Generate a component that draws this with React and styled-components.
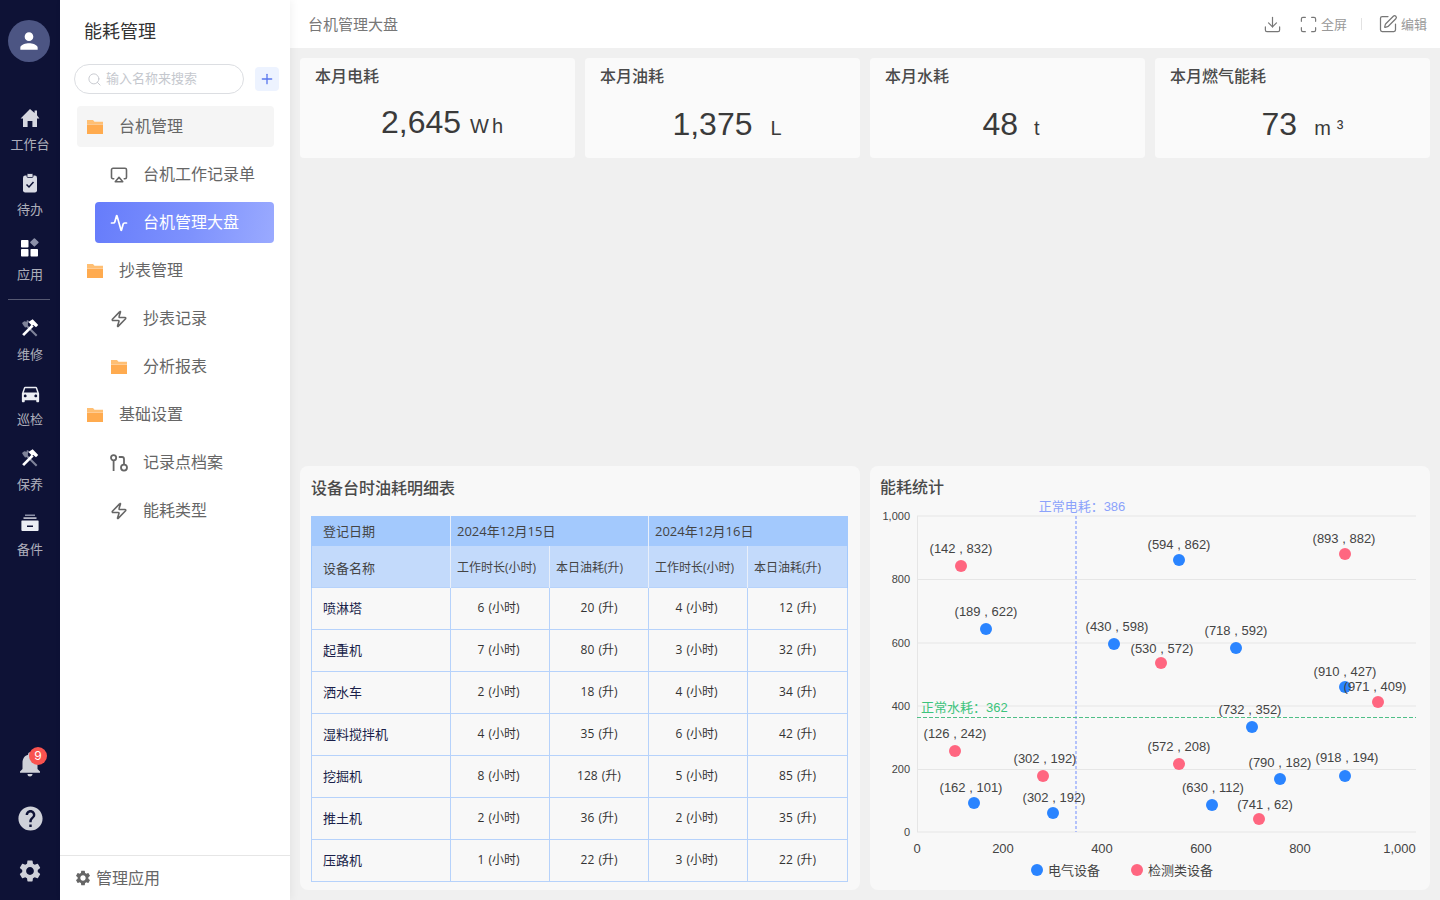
import React from 'react';
import styled, { createGlobalStyle } from 'styled-components';
import { Activity, Airplay, Zap, Search, Plus, Download, Maximize, SquarePen } from 'lucide-react';
import { MdDirectionsCar, MdNotifications, MdHelp, MdSettings, MdPerson } from 'react-icons/md';

const FONT = `Inter, "Noto Sans CJK SC", "Noto Sans", sans-serif`;
const ARIAL = `"Liberation Sans", "Noto Sans CJK SC", sans-serif`;
const OPEN = `"Open Sans", "Noto Sans CJK SC", sans-serif`;

const Global = createGlobalStyle`
  html, body { margin: 0; padding: 0; height: 100%; }
  body { font-family: ${FONT}; background: #f0f0f0; overflow: hidden; }
  * { box-sizing: border-box; }
`;

const Page = styled.div`display: flex; width: 1440px; height: 900px; overflow: hidden;`;

const Rail = styled.nav`
  width: 60px; flex: none; background: #0e1236; display: flex; flex-direction: column; align-items: center; padding-top: 20px;
`;
const Avatar = styled.div`
  width: 42px; height: 42px; border-radius: 50%; background: #4c5583; color: #fff; margin-right: 2px;
  display: flex; align-items: center; justify-content: center; margin-bottom: 39px;
`;
const RailItem = styled.div`
  width: 60px; height: 65px; display: flex; flex-direction: column; align-items: center; padding-top: 5px;
  color: rgba(255,255,255,.68); font-size: 13px; line-height: 18px; gap: 5px;
`;
const RailIcon = styled.span`
  width: 24px; height: 24px; display: flex; align-items: center; justify-content: center; color: #eceef4;
`;
const RailDivider = styled.div`width: 42px; height: 1px; background: rgba(255,255,255,.3); margin: 3px 2px 11px 0;`;
const RailBottom = styled.div`
  margin-top: auto; display: flex; flex-direction: column; align-items: center; gap: 25px; padding-bottom: 16px; color: #cfd1d9;
  svg { display: block; }
`;
const BellWrap = styled.div`position: relative; width: 30px; height: 30px;`;
const Badge = styled.span`
  position: absolute; top: -2px; left: 14px; width: 18px; height: 18px; border-radius: 50%;
  background: #f9534f; color: #fff; font-size: 12px; line-height: 18px; text-align: center;
`;

const SubNav = styled.aside`
  width: 230px; flex: none; background: #fff; display: flex; flex-direction: column; position: relative;
  box-shadow: 2px 0 8px rgba(0,0,0,.05); z-index: 2;
`;
const SubTitle = styled.h1`
  margin: 0; padding: 20px 0 0 24px; height: 64px; font-size: 18px; line-height: 24px; font-weight: 400; color: #333;
`;
const SearchRow = styled.div`display: flex; align-items: center; padding-left: 14px; gap: 11px; height: 30px; margin-bottom: 12px;`;
const SearchBox = styled.div`
  width: 170px; height: 30px; border: 1px solid #dcdee2; border-radius: 15px; display: flex; align-items: center;
  padding-left: 12px; gap: 4px; color: #c5c8ce; font-size: 13px;
`;
const SearchText = styled.span`padding-bottom: 3px;`;
const AddBtn = styled.div`
  width: 24px; height: 24px; border-radius: 4px; background: #edf3ff; color: #5b78ee; display: flex; align-items: center; justify-content: center;
`;
const Menu = styled.div`display: flex; flex-direction: column; gap: 7px; padding: 0 16px 0 17px;`;
const MenuItem = styled.div`
  height: 41px; border-radius: 4px; display: flex; align-items: center; font-size: 16px; font-weight: 400; gap: 15px;
  margin-left: ${p => (p.$child ? '18px' : '0')};
  padding-left: ${p => (p.$child ? '15px' : '9px')};
  color: ${p => (p.$active ? '#fff' : '#666')};
  background: ${p => (p.$active ? 'linear-gradient(100deg,#667cfb 0%,#7e92fd 55%,#9aaaff 100%)' : p.$open ? '#f5f5f5' : 'transparent')};
`;
const MenuLabel = styled.span`padding-bottom: 3px;`;
const IconSlot = styled.span`width: 18px; height: 18px; flex: none; display: flex; align-items: center; justify-content: center;`;
const SubFooter = styled.div`
  margin-top: auto; height: 45px; border-top: 1px solid #e6e6e6; display: flex; align-items: center; padding-left: 14px; gap: 4px;
  font-size: 16px; color: #666;
`;

const Content = styled.div`flex: 1; min-width: 0; display: flex; flex-direction: column;`;
const Header = styled.header`
  height: 48px; flex: none; background: #fff; display: flex; align-items: center; padding: 0 13px 0 18px;
  font-size: 15px; color: #777;
`;
const HeaderTitle = styled.div`flex: 1; padding-bottom: 2px;`;
const Tool = styled.div`display: flex; align-items: center; gap: 3px; font-size: 13px; color: #999; margin-left: ${p => p.$gap || 0}px;`;
const ToolLabel = styled.span`padding-bottom: 2px;`;
const ToolIcon = styled.span`display: flex; color: #777;`;
const ToolSep = styled.div`width: 1px; height: 12px; background: #e2e2e2; margin-left: 14px;`;

const Main = styled.main`flex: 1; min-height: 0; display: flex; flex-direction: column; justify-content: space-between; padding: 10px;`;
const Stats = styled.section`display: grid; grid-template-columns: repeat(4, minmax(0, 1fr)); gap: 10px;`;
const StatCard = styled.div`height: 100px; background: #fafafa; border-radius: 4px; padding: 7px 15px 0; `;
const StatTitle = styled.div`font-size: 16px; line-height: 22px; font-weight: 500; color: #4a4a4a;`;
const StatValue = styled.div`
  display: flex; justify-content: center; align-items: baseline; color: #3a3a3a; font-family: ${ARIAL}; font-size: 32px; line-height: 40px;
  margin-top: ${p => p.$top}px; padding-left: ${p => p.$shift}px;
`;
const StatUnit = styled.span`
  font-size: 20px; letter-spacing: ${p => p.$ls}px; margin-left: ${p => p.$gap}px;
`;

const Lower = styled.section`display: grid; grid-template-columns: repeat(2, minmax(0, 1fr)); gap: 10px; height: 424px;`;
const Panel = styled.div`background: #f8f8f8; border-radius: 8px; padding: ${p => p.$pad};`;
const PanelTitle = styled.h2`margin: 0; font-size: 16px; line-height: 22px; font-weight: 500; color: #4a4a4a;`;

const Table = styled.table`
  width: 536px; margin-top: 17px; border-collapse: collapse; table-layout: fixed; font-family: ${OPEN}; font-size: 12px; color: #333;
`;
const HeadTop = styled.tr`background: #a3c9fd; height: 30px;`;
const HeadSub = styled.tr`background: #c3dafb; height: 41px;`;
const Row = styled.tr`height: 42px;`;
const Th = styled.th`
  font-weight: 400; text-align: left; font-size: ${p => (p.$small ? '12px' : '13px')};
  padding: ${p => (p.$sub ? '2px' : '0')} ${p => (p.$first ? '11px' : '6px')} ${p => (p.$sub ? '0' : '2px')};
  color: #444; border-left: 1px solid ${p => (p.$first ? '#a3c9fd' : '#e8effa')}; border-right: 1px solid ${p => (p.$last ? '#a3c9fd' : '#e8effa')};
  white-space: nowrap; overflow: hidden;
`;
const Name = styled.td`
  padding: 0 11px 2px; font-size: 13px; color: #1a1f4a; border: 1px solid #b6d2fb;
`;
const Cell = styled.td`
  padding: 0 ${p => (p.$hours ? '3px' : '0')} 2px 0; text-align: center; font-size: 12px; word-spacing: 1px; color: #333; border: 1px solid #b6d2fb;
`;

const ChartSvg = styled.svg`display: block; margin-left: -10px; margin-top: -8px;`;

const Folder = ({ size = 18 }) => (
  <svg width={size} height={size} viewBox="0 0 18 18">
    <path d="M1 2h6l1.5 1.8H17V6H1z" fill="#ffbf73" />
    <path d="M1 6.4h16V16H1z" fill="#ffab4f" />
  </svg>
);
const Pin = () => (
  <svg width="18" height="18" viewBox="0 0 18 18" fill="none" stroke="#666" strokeWidth="1.8">
    <circle cx="3.6" cy="3.8" r="2.6" />
    <path d="M3.6 6.4V17" />
    <path d="M8.8 3h3.2a2 2 0 0 1 2 2v5.6" />
    <circle cx="14" cy="13.6" r="3" />
  </svg>
);
const Home = () => (
  <svg width="20" height="20" viewBox="0 0 20 20" fill="#d6d7df">
    <path d="M10 1l4.6 4V2.6h2.4V7.2L19.4 10.4H17V19h-4.6v-6H7.6v6H3v-8.6H.6z" />
  </svg>
);
const Hammer = () => (
  <svg width="20" height="20" viewBox="0 0 18 18" fill="none">
    <path d="M6 7l9 9" stroke="#7f8399" strokeWidth="1.8" />
    <path d="M1.8 4.6l2-1.6L6 3.4l.2-1.6 2 1-1 2-.2 3-2.4.8-1.6-2z" fill="#7f8399" />
    <path d="M2.8 15.4l8.6-8.6" stroke="#fff" strokeWidth="2.4" />
    <path d="M7.6 3.6L11.4 1.2l5 5-2 2.2-2.4-2.2-1.4 .6z" fill="#fff" />
  </svg>
);
const Todo = () => (
  <svg width="20" height="22" viewBox="0 0 20 22">
    <rect x="3" y="3.5" width="14" height="17" rx="2.2" fill="#d9dbe4" />
    <rect x="7" y="1.5" width="6" height="4" rx="1" fill="#d9dbe4" stroke="#0e1236" strokeWidth="0.8" />
    <path d="M6.5 12.5l2.5 2.5 4.5-5" fill="none" stroke="#0e1236" strokeWidth="1.5" />
  </svg>
);
const Apps = () => (
  <svg width="20" height="20" viewBox="0 0 20 20" fill="#fff">
    <rect x="1" y="2" width="7.5" height="7.5" rx="0.8" />
    <rect x="1" y="11" width="7.5" height="7.5" rx="0.8" />
    <rect x="10.5" y="11" width="7.5" height="7.5" rx="0.8" />
    <rect x="11.2" y="1.2" width="6.4" height="6.4" rx="0.8" fill="#8c90a8" transform="rotate(45 14.4 4.4)" />
  </svg>
);
const Drawer = () => (
  <svg width="20" height="20" viewBox="0 0 20 20">
    <rect x="5" y="1.5" width="10" height="1.5" fill="#8c90a8" />
    <rect x="3.5" y="4.3" width="13" height="1.6" fill="#c8cad6" />
    <path d="M2 7.5h16a.6.6 0 0 1 .6.6V17a1 1 0 0 1-1 1H2.4a1 1 0 0 1-1-1V8.1a.6.6 0 0 1 .6-.6z" fill="#eceef4" />
    <rect x="7" y="12.5" width="6" height="1.5" fill="#0e1236" />
  </svg>
);

const railTop = [
  [<Home />, '工作台'],
  [<Todo />, '待办'],
  [<Apps />, '应用'],
];
const railMid = [
  [<Hammer />, '维修'],
  [<MdDirectionsCar size={23} />, '巡检'],
  [<Hammer />, '保养'],
  [<Drawer />, '备件'],
];

const menu = [
  { icon: <Folder />, label: '台机管理', open: true },
  { icon: <Airplay size={22} strokeWidth={2.1} />, label: '台机工作记录单', child: true },
  { icon: <Activity size={22} strokeWidth={2.3} />, label: '台机管理大盘', child: true, active: true },
  { icon: <Folder />, label: '抄表管理' },
  { icon: <Zap size={24} strokeWidth={2.1} />, label: '抄表记录', child: true },
  { icon: <Folder />, label: '分析报表', child: true },
  { icon: <Folder />, label: '基础设置' },
  { icon: <Pin />, label: '记录点档案', child: true },
  { icon: <Zap size={24} strokeWidth={2.1} />, label: '能耗类型', child: true },
];

const stats = [
  { t: '本月电耗', v: '2,645', u: 'Wh', gap: 9, top: 15, ls: 3, shift: 12 },
  { t: '本月油耗', v: '1,375', u: 'L', gap: 18, top: 17, ls: 3, shift: 12 },
  { t: '本月水耗', v: '48', u: 't', gap: 16, top: 17, ls: 3, shift: 10 },
  { t: '本月燃气能耗', v: '73', u: 'm³', gap: 17, top: 17, ls: 6, shift: 26 },
];

const rows = [
  ['喷淋塔', 6, 20, 4, 12], ['起重机', 7, 80, 3, 32], ['洒水车', 2, 18, 4, 34], ['湿料搅拌机', 4, 35, 6, 42],
  ['挖掘机', 8, 128, 5, 85], ['推土机', 2, 36, 2, 35], ['压路机', 1, 22, 3, 22],
];

const BLUE = '#2a84ff';
const RED = '#ff6680';
const pts = [
  [961, 566, RED, '(142 , 832)', 961, 553], [986, 629, BLUE, '(189 , 622)', 986, 616], [1179, 560, BLUE, '(594 , 862)', 1179, 549],
  [1345, 554, RED, '(893 , 882)', 1344, 543], [1114, 644, BLUE, '(430 , 598)', 1117, 631], [1161, 663, RED, '(530 , 572)', 1162, 653],
  [1236, 648, BLUE, '(718 , 592)', 1236, 635], [1345, 687, BLUE, '(910 , 427)', 1345, 676], [1378, 702, RED, '(971 , 409)', 1375, 691],
  [1252, 727, BLUE, '(732 , 352)', 1250, 714], [955, 751, RED, '(126 , 242)', 955, 738], [1043, 776, RED, '(302 , 192)', 1045, 763],
  [1179, 764, RED, '(572 , 208)', 1179, 751], [1280, 779, BLUE, '(790 , 182)', 1280, 767], [1345, 776, BLUE, '(918 , 194)', 1347, 762],
  [974, 803, BLUE, '(162 , 101)', 971, 792], [1053, 813, BLUE, '(302 , 192)', 1054, 802], [1212, 805, BLUE, '(630 , 112)', 1213, 792],
  [1259, 819, RED, '(741 , 62)', 1265, 809],
];
const yTicks = [[516, '1,000'], [579.5, '800'], [643, '600'], [706, '400'], [769.5, '200'], [832, '0']];
const xTicks = [[917, '0'], [1003, '200'], [1102, '400'], [1201, '600'], [1300, '800'], [1399.5, '1,000']];

const Chart = () => (
  <ChartSvg width="560" height="400" viewBox="870 490 560 400" fontFamily={ARIAL}>
    {yTicks.map(([y, l]) => (
      <g key={l}>
        <line x1="917" x2="1416" y1={y} y2={y} stroke="#e6e6e6" />
        <text x="910" y={y + 3.5} textAnchor="end" fontSize="11" fill="#444">{l}</text>
      </g>
    ))}
    <line x1="917.5" x2="917.5" y1="516" y2="832" stroke="#e6e6e6" />
    {xTicks.map(([x, l]) => (
      <text key={x} x={x} y="853" textAnchor="middle" fontSize="13" fill="#444">{l}</text>
    ))}
    <line x1="1076" x2="1076" y1="516" y2="832" stroke="#9db0fb" strokeDasharray="3 2" strokeWidth="1.5" />
    <text x="1082" y="511" textAnchor="middle" fontSize="13" fill="#8ba2fb">正常电耗：386</text>
    <line x1="917" x2="1416" y1="717.5" y2="717.5" stroke="#4fbf87" strokeDasharray="4 2" strokeWidth="1" />
    <text x="921" y="712" fontSize="13" fill="#3cc47c">正常水耗：362</text>
    {pts.map(([x, y, c], i) => <circle key={i} cx={x} cy={y} r="6" fill={c} />)}
    {pts.map(([, , , l, x, y], i) => (
      <text key={i} x={x} y={y} textAnchor="middle" fontSize="13" fill="#444">{l}</text>
    ))}
    <circle cx="1037" cy="870" r="6" fill={BLUE} />
    <text x="1048" y="875" fontSize="13" fill="#444">电气设备</text>
    <circle cx="1137" cy="870" r="6" fill={RED} />
    <text x="1148" y="875" fontSize="13" fill="#444">检测类设备</text>
  </ChartSvg>
);

export default function App() {
  return (
    <Page>
      <Global />
      <Rail>
        <Avatar><MdPerson size={26} /></Avatar>
        {railTop.map(([i, l]) => <RailItem key={l}><RailIcon>{i}</RailIcon>{l}</RailItem>)}
        <RailDivider />
        {railMid.map(([i, l]) => <RailItem key={l}><RailIcon>{i}</RailIcon>{l}</RailItem>)}
        <RailBottom>
          <BellWrap><MdNotifications size={30} /><Badge>9</Badge></BellWrap>
          <MdHelp size={29} />
          <MdSettings size={26} />
        </RailBottom>
      </Rail>
      <SubNav>
        <SubTitle>能耗管理</SubTitle>
        <SearchRow>
          <SearchBox><Search size={15} strokeWidth={1.5} /><SearchText>输入名称来搜索</SearchText></SearchBox>
          <AddBtn><Plus size={16} /></AddBtn>
        </SearchRow>
        <Menu>
          {menu.map(m => (
            <MenuItem key={m.label} $child={m.child} $active={m.active} $open={m.open}>
              <IconSlot>{m.icon}</IconSlot><MenuLabel>{m.label}</MenuLabel>
            </MenuItem>
          ))}
        </Menu>
        <SubFooter><MdSettings size={18} /><MenuLabel>管理应用</MenuLabel></SubFooter>
      </SubNav>
      <Content>
        <Header>
          <HeaderTitle>台机管理大盘</HeaderTitle>
          <Tool><ToolIcon><Download size={19} strokeWidth={1.5} /></ToolIcon></Tool>
          <Tool $gap={17}><ToolIcon><Maximize size={19} strokeWidth={1.5} /></ToolIcon><ToolLabel>全屏</ToolLabel></Tool>
          <ToolSep />
          <Tool $gap={16}><ToolIcon><SquarePen size={20} strokeWidth={1.5} /></ToolIcon><ToolLabel>编辑</ToolLabel></Tool>
        </Header>
        <Main>
          <Stats>
            {stats.map(s => (
              <StatCard key={s.t}>
                <StatTitle>{s.t}</StatTitle>
                <StatValue $top={s.top} $shift={s.shift}>{s.v}<StatUnit $gap={s.gap} $ls={s.ls}>{s.u}</StatUnit></StatValue>
              </StatCard>
            ))}
          </Stats>
          <Lower>
            <Panel $pad="11px 11px 0">
              <PanelTitle>设备台时油耗明细表</PanelTitle>
              <Table>
                <colgroup>
                  <col width="139" /><col width="99" /><col width="99" /><col width="99" /><col width="100" />
                </colgroup>
                <thead>
                  <HeadTop>
                    <Th $first>登记日期</Th>
                    <Th colSpan={2}>2024年12月15日</Th>
                    <Th colSpan={2} $last>2024年12月16日</Th>
                  </HeadTop>
                  <HeadSub>
                    <Th $first $sub>设备名称</Th>
                    <Th $small $sub>工作时长(小时)</Th>
                    <Th $small $sub>本日油耗(升)</Th>
                    <Th $small $sub>工作时长(小时)</Th>
                    <Th $small $sub $last>本日油耗(升)</Th>
                  </HeadSub>
                </thead>
                <tbody>
                  {rows.map(r => (
                    <Row key={r[0]}>
                      <Name>{r[0]}</Name>
                      <Cell $hours>{r[1]} (小时)</Cell>
                      <Cell>{r[2]} (升)</Cell>
                      <Cell $hours>{r[3]} (小时)</Cell>
                      <Cell>{r[4]} (升)</Cell>
                    </Row>
                  ))}
                </tbody>
              </Table>
            </Panel>
            <Panel $pad="10px 10px 0">
              <PanelTitle>能耗统计</PanelTitle>
              <Chart />
            </Panel>
          </Lower>
        </Main>
      </Content>
    </Page>
  );
}
